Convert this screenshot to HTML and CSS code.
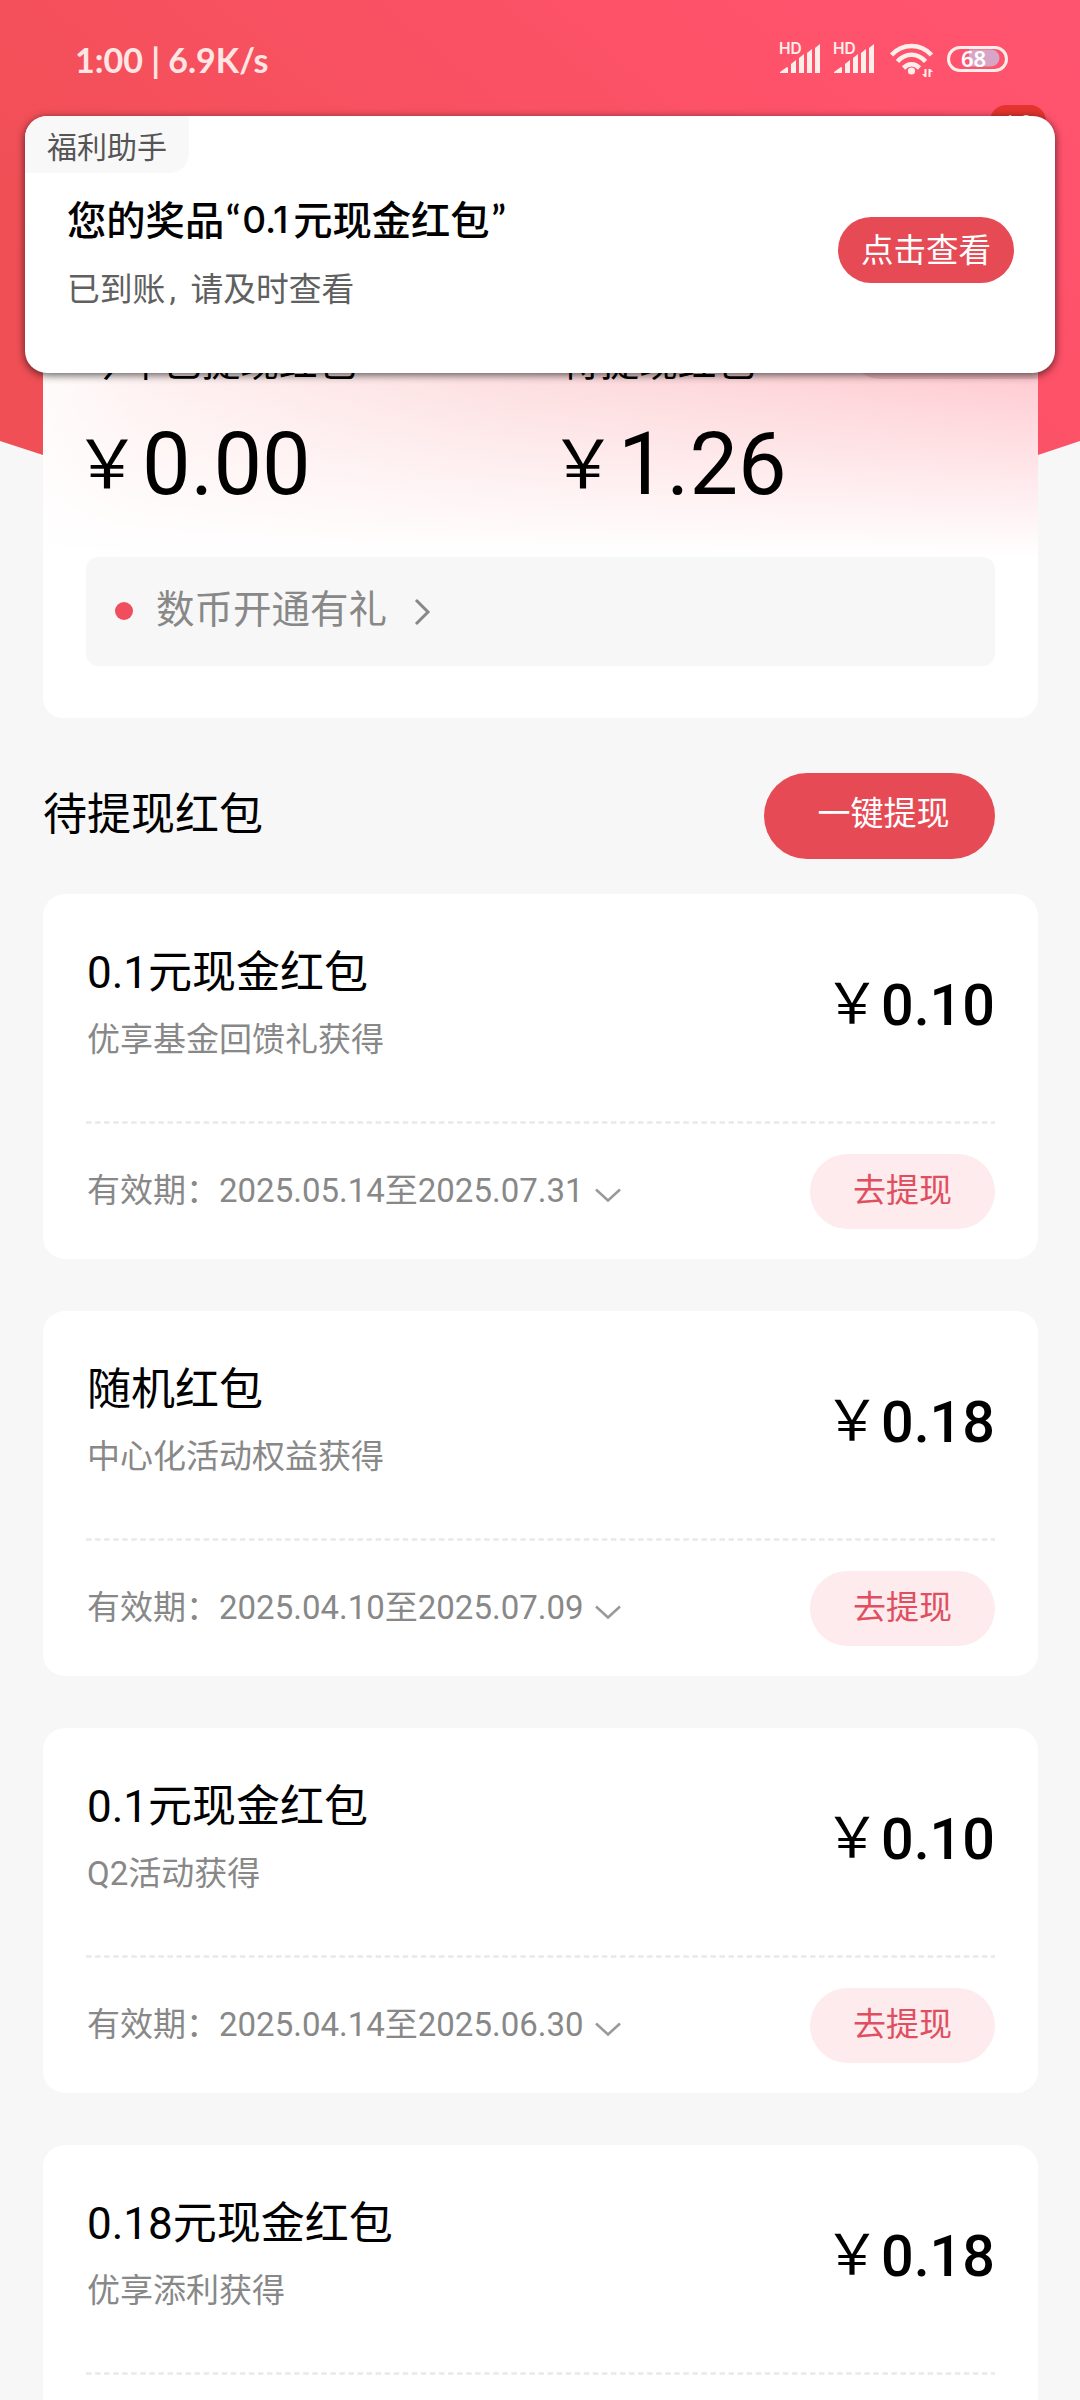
FILE: index.html
```html
<!DOCTYPE html>
<html lang="zh-CN">
<head>
<meta charset="utf-8">
<title>红包</title>
<link rel="stylesheet" href="styles.css">
</head>
<body>
<div class="screen">
  <svg class="backdrop" width="1080" height="640" viewBox="0 0 1080 640">
    <defs>
      <linearGradient id="red" x1="0" y1="0.5" x2="1" y2="0">
        <stop offset="0" stop-color="#f04f55"/>
        <stop offset="0.75" stop-color="#ff526b"/>
        <stop offset="1" stop-color="#ff5470"/>
      </linearGradient>
    </defs>
    <path d="M0 0H1080V441L1038 455H43L0 441Z" fill="url(#red)"/>
  </svg>

  <header class="status">
    <div class="clock">1:00 | 6.9K/s</div>
    <svg class="status-icons" width="232" height="40" viewBox="0 0 232 40" fill="#ffeeea">
      <g id="sim">
        <text x="0" y="12" class="hd">HD</text>
        <path d="M1 31v-1l7-5q1 0 1 1v5zM12 31v-9l5-4v13zM20 31v-15l5-4v19zM28 31v-20l5-4v24zM36 31v-25l5-4v29z"/>
      </g>
      <use href="#sim" x="54"/>
      <g fill="none" stroke="#ffeeea" stroke-width="4.600">
        <path d="M112.500 13c11-12 29-12 40 0"/>
        <path d="M118.500 19.500c8-9 20-9 28 0"/>
        <path d="M124.500 26c5-5 11-5 16 0"/>
      </g>
      <circle cx="132.500" cy="29" r="3.600"/>
      <path d="M147.500 27v8h-1.800l-2.700-3h2.500v-5zM149.500 35v-8h1.800l2.700 3h-2.500v5z"/>
      <path d="M190 7.500h22a8.500 8.500 0 0 1 0 17h-22z" fill="#d7a6c6"/>
      <rect x="169.500" y="5.500" width="58" height="23" rx="11.500" fill="none" stroke="#ffeeea" stroke-width="3"/>
      <text x="182" y="24.500" class="level">68</text>
    </svg>
  </header>

  <div class="badge">1.0</div>

  <main class="page">
    <section class="summary">
      <div class="totals">
        <div class="total">
          <div class="total-label">今年已提现红包</div>
          <div class="total-value"><span class="yen">￥</span>0.00</div>
        </div>
        <div class="total">
          <div class="total-label">待提现红包</div>
          <div class="total-value"><span class="yen">￥</span>1.26</div>
        </div>
        <div class="record"></div>
      </div>
      <div class="notice">
        <span class="dot"></span>
        <span>数币开通有礼</span>
        <svg width="18" height="28" viewBox="0 0 18 28"><path d="M2 2l12 12L2 26" fill="none" stroke="#888" stroke-width="3"/></svg>
      </div>
    </section>

    <div class="section-head">
      <h2>待提现红包</h2>
      <div class="all-button">一键提现</div>
    </div>

    <div class="list">
      <article class="card">
        <div class="card-top">
          <div><h3>0.1元现金红包</h3><p>优享基金回馈礼获得</p></div>
          <div class="amount"><span class="yen">￥</span>0.10</div>
        </div>
        <svg class="rule" width="909" height="3"><path d="M0 1.500H909"/></svg>
        <div class="card-bottom">
          <div class="validity">有效期：2025.05.14至2025.07.31</div>
          <svg class="chev" width="26" height="15" viewBox="0 0 26 15"><path d="M1 1.500l12 11 12-11"/></svg>
          <div class="go">去提现</div>
        </div>
      </article>
      <article class="card">
        <div class="card-top">
          <div><h3>随机红包</h3><p>中心化活动权益获得</p></div>
          <div class="amount"><span class="yen">￥</span>0.18</div>
        </div>
        <svg class="rule" width="909" height="3"><path d="M0 1.500H909"/></svg>
        <div class="card-bottom">
          <div class="validity">有效期：2025.04.10至2025.07.09</div>
          <svg class="chev" width="26" height="15" viewBox="0 0 26 15"><path d="M1 1.500l12 11 12-11"/></svg>
          <div class="go">去提现</div>
        </div>
      </article>
      <article class="card">
        <div class="card-top">
          <div><h3>0.1元现金红包</h3><p>Q2活动获得</p></div>
          <div class="amount"><span class="yen">￥</span>0.10</div>
        </div>
        <svg class="rule" width="909" height="3"><path d="M0 1.500H909"/></svg>
        <div class="card-bottom">
          <div class="validity">有效期：2025.04.14至2025.06.30</div>
          <svg class="chev" width="26" height="15" viewBox="0 0 26 15"><path d="M1 1.500l12 11 12-11"/></svg>
          <div class="go">去提现</div>
        </div>
      </article>
      <article class="card">
        <div class="card-top">
          <div><h3>0.18元现金红包</h3><p>优享添利获得</p></div>
          <div class="amount"><span class="yen">￥</span>0.18</div>
        </div>
        <svg class="rule" width="909" height="3"><path d="M0 1.500H909"/></svg>
      </article>
    </div>
  </main>

  <aside class="toast">
    <div class="toast-tag">福利助手</div>
    <div class="toast-body">
      <div>
        <div class="toast-title">您的奖品<span class="q">“</span><span class="num">0.1</span>元现金红包<span class="q">”</span></div>
        <div class="toast-text">已到账<span class="comma">,</span>请及时查看</div>
      </div>
      <div class="toast-button">点击查看</div>
    </div>
  </aside>
</div>
</body>
</html>
```
FILE: styles.css
```css
* { box-sizing: border-box; margin: 0; padding: 0; }
body { background: #f7f7f7; color: #000; font-family: Roboto, "Noto Sans CJK SC", sans-serif; }
.screen { position: relative; width: 1080px; height: 2400px; overflow: hidden; }
.backdrop { position: absolute; left: 0; top: 0; }

.status { position: relative; display: flex; justify-content: space-between; height: 116px; padding: 42px 69px 0 75px; }
.clock { font: 700 34px/35px Lato, sans-serif; color: #ffe6e4; }
.status-icons { display: block; overflow: visible; }
.hd { font: 600 15.500px Inter, sans-serif; }
.level { font: 600 22px "Noto Sans", sans-serif; fill: #fff; }
.badge { position: absolute; left: 990px; top: 105px; width: 56px; height: 32px; border-radius: 16px; background: #e5342f; color: #fff; font-size: 20px; line-height: 36px; text-align: center; }

.page { position: relative; padding: 0 42px 0 43px; }
.summary {
  height: 602px;
  padding: 222px 43px 0;
  border-radius: 20px;
  background:
    linear-gradient(to bottom, rgba(255,255,255,0) 250px, rgba(255,255,255,.5) 345px, #fff 440px),
    linear-gradient(100deg, #fff 0%, #fff0f0 14%, #fddcde 48%, #ffc6cd 100%);
}
.totals { position: relative; display: flex; height: 219px; }
.total { flex: none; width: 476px; }
.total-label { font-size: 38.600px; line-height: 50px; }
.total-value { display: flex; align-items: baseline; margin-top: 26px; font-size: 86.500px; line-height: 102px; }
.yen { position: relative; display: flex; justify-content: center; font-family: "Noto Sans CJK SC", sans-serif; font-weight: 400; line-height: 1; }
.total-value .yen { top: -6px; width: 56px; margin: 0 7px 0 -7px; font-size: 67px; }
.record { position: absolute; left: 764px; top: -20px; width: 188px; height: 61px; border-radius: 30px 0 0 30px; background: #f0b8be; }
.notice { display: flex; align-items: center; height: 109px; padding: 0 29px 5px; border-radius: 12px; background: #f7f7f7; color: #888; font-size: 38.500px; }
.notice span + span { margin-top: -6px; }
.notice .dot { width: 18px; height: 18px; margin: 4px 23px 0 0; border-radius: 50%; background: #f04e5d; }
.notice svg { margin: 5px 0 0 27px; }

.section-head { display: flex; align-items: center; justify-content: space-between; height: 175.500px; padding: 20px 43px 0 0; }
h2 { margin-top: -2px; font-weight: 400; font-size: 44px; line-height: 60px; }
.all-button { width: 231px; height: 86px; padding-left: 8px; border-radius: 43px; background: #e64a55; color: #fff; font-size: 33px; line-height: 82px; text-align: center; }

.list { display: grid; gap: 52px; }
.card { height: 365px; padding: 0 43px; border-radius: 22px; background: #fff; }
.card-top { display: flex; justify-content: space-between; height: 227px; padding: 49px 0 0 1px; }
h3 { font-weight: 400; font-size: 44px; line-height: 60px; }
.card p { margin-top: 12px; color: #888; font-size: 33px; line-height: 50px; }
.amount { display: flex; align-items: baseline; height: 76px; margin-top: 25px; font-size: 57.500px; line-height: 76px; font-weight: 500; }
.amount .yen { top: -2px; width: 50px; margin-right: 4px; font-size: 56px; }
.rule { display: block; }
.rule path { stroke: #e9e9e9; stroke-width: 2.500; stroke-dasharray: 5.500 3.550; }
.card-bottom { display: flex; align-items: center; height: 136px; padding-left: 1px; }
.validity { margin-top: -2px; color: #888; font-size: 33px; line-height: 50px; }
.chev { margin: 8px 0 0 11px; fill: none; stroke: #999; stroke-width: 2.500; }
.go { width: 185px; height: 75px; margin-left: auto; border-radius: 38px; background: #fdebed; color: #e04f60; font-size: 33px; line-height: 73px; text-align: center; }

.toast { position: absolute; left: 25px; top: 116px; width: 1030px; height: 257px; border-radius: 22px; background: #fff; box-shadow: 0 2px 8px rgba(0,0,0,.65); }
.toast-tag { width: 164px; height: 57px; padding-left: 22px; border-radius: 22px 0 20px 0; background: #f8f8f8; color: #555; font-size: 30px; line-height: 63px; }
.toast-body { display: flex; justify-content: space-between; padding: 15px 41px 0 42px; }
.toast-title { display: flex; font-weight: 500; font-size: 39.300px; line-height: 60px; font-family: "Noto Sans CJK SC", sans-serif; }
.toast-title .q { width: 18px; font-family: Lato, sans-serif; font-weight: 600; text-align: center; }
.toast-title .num { width: 51px; padding-top: 2px; font-family: Inter, sans-serif; font-size: 37px; }
.toast-text { display: flex; margin-top: 15px; color: #606060; font-size: 32.800px; line-height: 50px; }
.comma { width: 25px; padding-left: 4px; }
.toast-button { width: 176px; height: 66px; margin-top: 29px; border-radius: 33px; background: #e64a55; color: #fff; font-size: 32.500px; line-height: 69px; text-align: center; }
```
